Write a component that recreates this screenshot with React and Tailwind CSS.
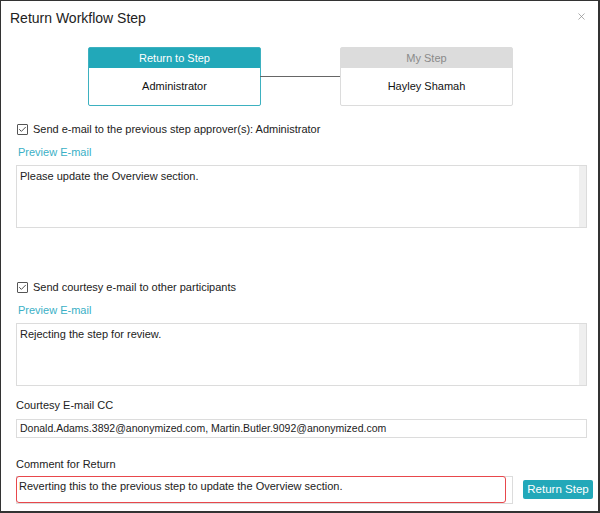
import { Check, X } from 'lucide-react';

const teal = 'bg-[#22a8b9]';

function StepBox({ title, name, active }) {
  return (
    <div
      className={`w-[173px] h-[59px] rounded-[2px] border flex flex-col ${
        active ? 'border-[#3db1c0]' : 'border-[#dcdcdc]'
      }`}
    >
      <div
        className={`h-[20px] flex items-center justify-center text-[11px] ${
          active ? `${teal} text-white` : 'bg-[#dcdcdc] text-[#8a8a8a]'
        }`}
      >
        {title}
      </div>
      <div className="flex-1 flex items-center justify-center text-[11px] text-[#111]">{name}</div>
    </div>
  );
}

function CheckRow({ label }) {
  return (
    <div className="flex items-center gap-[5px] text-[11px] leading-[14px] text-[#222]">
      <span className="w-[11px] h-[11px] border border-[#555] rounded-[1px] flex items-center justify-center">
        <Check size={9} strokeWidth={2.5} className="text-[#444]" />
      </span>
      {label}
    </div>
  );
}

function MailBox({ text }) {
  return (
    <div className="h-[63px] border border-[#dcdcdc] flex">
      <div className="flex-1 px-[3px] pt-[3px] text-[11px] leading-[14px] text-[#222]">{text}</div>
      <div className="w-[7px] bg-[#efefef]" />
    </div>
  );
}

export default function App() {
  return (
    <div
      className="w-[600px] h-[513px] bg-white border-t border-l border-r-2 border-b-2 border-[#333] relative overflow-hidden"
      style={{ fontFamily: '"Liberation Sans", Arial, sans-serif' }}
    >
      <div className="pl-[9px] pt-[7px] text-[14px] text-[#222] leading-[20px]">Return Workflow Step</div>
      <X size={11} strokeWidth={1.5} className="absolute right-[11px] top-[10px] text-[#888]" />

      <div className="flex items-center ml-[87px] mt-[19px]">
        <StepBox title="Return to Step" name="Administrator" active />
        <div className="w-[80px] h-[1px] bg-[#666] -ml-px" />
        <StepBox title="My Step" name="Hayley Shamah" />
      </div>

      <div className="pl-[15px] pr-[11px]">
        <div className="mt-[16px] ml-[1px]">
          <CheckRow label="Send e-mail to the previous step approver(s): Administrator" />
        </div>
        <div className="mt-[9px] ml-[2px] text-[11px] leading-[14px] text-[#3ab0c6]">Preview E-mail</div>
        <div className="mt-[6px]">
          <MailBox text="Please update the Overview section." />
        </div>

        <div className="mt-[52px] ml-[1px]">
          <CheckRow label="Send courtesy e-mail to other participants" />
        </div>
        <div className="mt-[9px] ml-[2px] text-[11px] leading-[14px] text-[#3ab0c6]">Preview E-mail</div>
        <div className="mt-[6px]">
          <MailBox text="Rejecting the step for review." />
        </div>

        <div className="mt-[12px] text-[11px] leading-[14px] text-[#222]">Courtesy E-mail CC</div>
        <div className="mt-[7px] h-[19px] border border-[#dcdcdc] px-[3px] flex items-center text-[10.5px] text-[#222]">
          Donald.Adams.3892@anonymized.com, Martin.Butler.9092@anonymized.com
        </div>

        <div className="mt-[19px] text-[11px] leading-[14px] text-[#222]">Comment for Return</div>
        <div className="mt-[5px] flex items-start">
          <div className="w-[497px] h-[28px] border border-[#dcdcdc] flex shrink-0">
            <div className="w-[490px] h-[27px] -mt-px -ml-px border-[1.5px] border-[#e8474c] rounded-[3px] px-[2px] pt-[2px] text-[11px] text-[#222] leading-[14px]">
              Reverting this to the previous step to update the Overview section.
            </div>
          </div>
          <button
            className={`ml-[10px] mt-[4px] h-[19px] w-[70px] shrink-0 justify-center whitespace-nowrap rounded-[2px] ${teal} text-white text-[11.5px] flex items-center`}
          >
            Return Step
          </button>
        </div>
      </div>
    </div>
  );
}
